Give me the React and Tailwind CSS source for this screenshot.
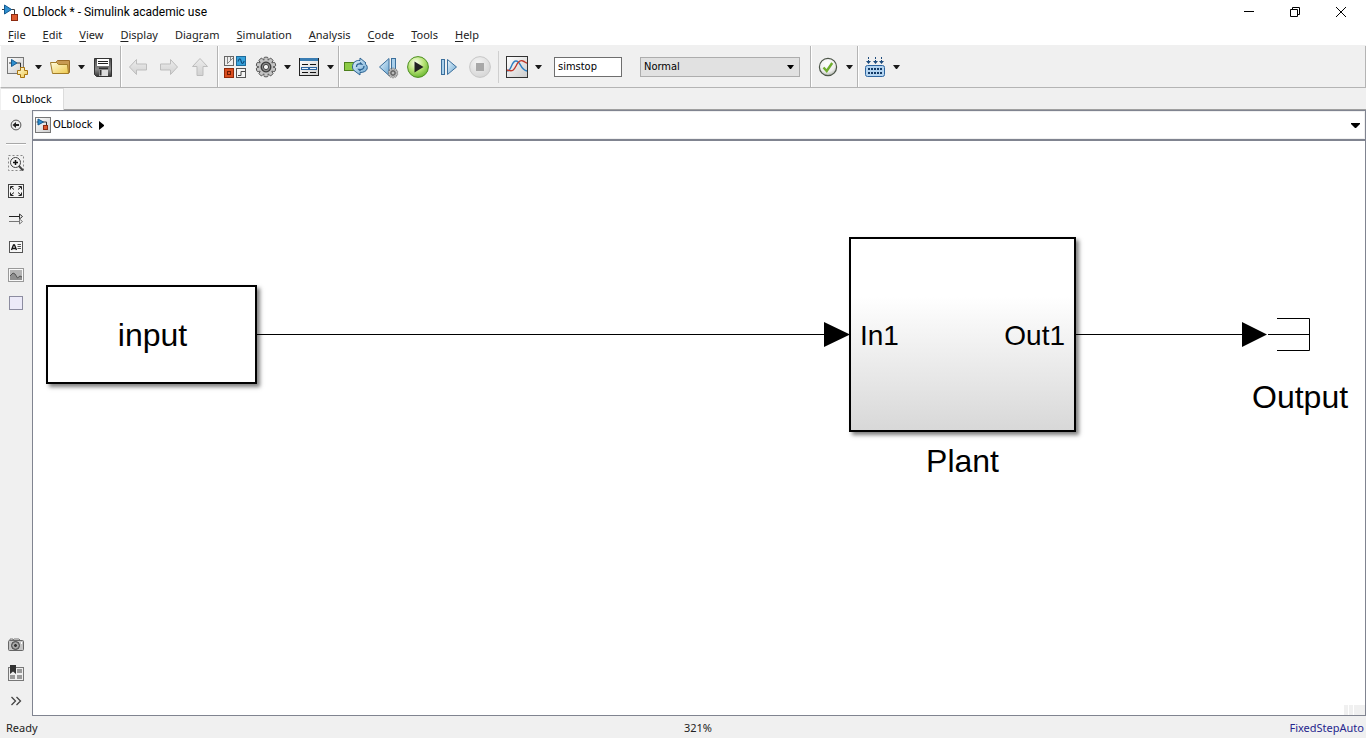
import React from "react";

const UI = "font-['Noto_Sans',sans-serif]";
const SMALL = "font-['DejaVu_Sans_Condensed','DejaVu_Sans',sans-serif]";

function Icon({ w = 24, h = 24, children }) {
  return (
    <svg width={w} height={h} viewBox={`0 0 ${w} ${h}`} fill="none" aria-hidden="true" className="block shrink-0">
      {children}
    </svg>
  );
}

function ToolButton({ label, children }) {
  return (
    <button type="button" aria-label={label} className="h-6 w-6 shrink-0">
      <Icon>{children}</Icon>
    </button>
  );
}

function Caret({ label }) {
  return (
    <button type="button" aria-label={label} className="flex h-6 w-[17px] shrink-0 items-center pl-[6px]">
      <Icon w={7} h={4}>
        <path d="M0 0h7L4 4H3z" fill="#1a1a1a" />
      </Icon>
    </button>
  );
}

function DropTool({ label, children }) {
  return (
    <div className="flex items-center">
      <ToolButton label={label}>{children}</ToolButton>
      <Caret label={`${label} options`} />
    </div>
  );
}

function Separator() {
  return <div className="w-[2px] shrink-0 self-stretch border-l border-r border-l-[#b4b4b4] border-r-white" />;
}

function ModelGlyph() {
  return (
    <>
      <path d="M0 5.500h3M9 5.500h3.500v5" stroke="#3a3a3a" />
      <path d="M2.500 1v9L9.500 5.500z" fill="#2d8fd0" stroke="#14598f" />
      <rect x="9.500" y="10.500" width="6" height="6" fill="#dd5a2e" stroke="#8c2a10" />
    </>
  );
}

function SmallModelIcon() {
  return (
    <Icon w={16} h={16}>
      <rect x=".5" y=".5" width="15" height="15" fill="url(#paper)" stroke="#777" />
      <path d="M1.500 5H4M8 5h3.500v4" stroke="#333" />
      <path d="M3 2v6l5.500-3z" fill="#2d8fd0" stroke="#14598f" />
      <rect x="8.500" y="8.500" width="4" height="4" fill="#dd5a2e" stroke="#8c2a10" />
    </Icon>
  );
}

function Gear({ cx, cy, s }) {
  const teeth = [0, 36, 72, 108, 144, 180, 216, 252, 288, 324];
  return (
    <g transform={`translate(${cx} ${cy}) scale(${s})`}>
      {teeth.map((a) => (
        <rect key={a} x="-2" y="-9.800" width="4" height="5" rx="1" transform={`rotate(${a})`} fill="#c4c4c4" stroke="#4a4a4a" strokeWidth=".9" />
      ))}
      <circle r="7.600" fill="#bcbcbc" stroke="#555" strokeWidth=".8" />
      {teeth.map((a) => (
        <rect key={a} x="-1.500" y="-9" width="3" height="3" transform={`rotate(${a})`} fill="#c4c4c4" />
      ))}
      <circle r="4.800" fill="#8a8a8a" stroke="#3c3c3c" strokeWidth="1.300" />
      <circle r="2.600" fill="#f6f6f6" stroke="#444" />
    </g>
  );
}

function Defs() {
  return (
    <svg width="0" height="0" className="absolute" aria-hidden="true">
      <defs>
        <linearGradient id="paper" x1="0" y1="0" x2="1" y2="1">
          <stop offset="0" stopColor="#fff" /><stop offset="1" stopColor="#ccc" />
        </linearGradient>
        <linearGradient id="gold" x1="0" y1="0" x2="1" y2="1">
          <stop offset="0" stopColor="#fffce0" /><stop offset="1" stopColor="#eec84a" />
        </linearGradient>
        <linearGradient id="steel" x1="0" y1="0" x2="0" y2="1">
          <stop offset="0" stopColor="#4c4c4c" /><stop offset=".6" stopColor="#8a8a8a" /><stop offset="1" stopColor="#333" />
        </linearGradient>
        <linearGradient id="sky" x1="0" y1="0" x2="1" y2="1">
          <stop offset="0" stopColor="#e6f3fb" /><stop offset="1" stopColor="#6da9d4" />
        </linearGradient>
        <linearGradient id="mist" x1="0" y1="0" x2="0" y2="1">
          <stop offset="0" stopColor="#ececec" /><stop offset="1" stopColor="#d2d2d2" />
        </linearGradient>
        <radialGradient id="lime" cx=".4" cy=".3" r=".75">
          <stop offset="0" stopColor="#fbfff0" /><stop offset=".5" stopColor="#b9e478" /><stop offset="1" stopColor="#64b32a" />
        </radialGradient>
        <radialGradient id="pearl" cx=".45" cy=".3" r=".8">
          <stop offset="0" stopColor="#fff" /><stop offset=".6" stopColor="#eee" /><stop offset="1" stopColor="#9aa093" />
        </radialGradient>
        <radialGradient id="ash" cx=".4" cy=".3" r=".8">
          <stop offset="0" stopColor="#f4f4f4" /><stop offset="1" stopColor="#d2d2d2" />
        </radialGradient>
      </defs>
    </svg>
  );
}

function TitleBar() {
  return (
    <header className="flex h-6 items-center bg-white pl-[2px]">
      <Icon w={17} h={17}><ModelGlyph /></Icon>
      <h1 className="ml-[4px] flex-1 font-['Roboto',sans-serif] text-[12px] leading-4 text-black">
        OLblock * - Simulink academic use
      </h1>
      <button type="button" aria-label="Minimize" className="flex h-5 w-[46px] items-center justify-center">
        <Icon w={10} h={10}><path d="M0 4.500h10" stroke="#000" /></Icon>
      </button>
      <button type="button" aria-label="Restore" className="flex h-5 w-[46px] items-center justify-center">
        <Icon w={10} h={10}><path d="M.5 2.500h7v7h-7zM2.500 2V.5h7v7H8" stroke="#000" /></Icon>
      </button>
      <button type="button" aria-label="Close" className="mr-[2px] flex h-5 w-[46px] items-center justify-center">
        <Icon w={10} h={10}><path d="M0 0l10 10M10 0L0 10" stroke="#000" /></Icon>
      </button>
    </header>
  );
}

const menus = [
  ["", "F", "ile"], ["", "E", "dit"], ["", "V", "iew"], ["", "D", "isplay"], ["Diag", "r", "am"],
  ["", "S", "imulation"], ["", "A", "nalysis"], ["", "C", "ode"], ["", "T", "ools"], ["", "H", "elp"],
];

function MenuBar() {
  return (
    <nav className={`${UI} flex h-[22px] items-center gap-px border-b border-[#f0f0f0] bg-white text-[11px] leading-4 text-[#222]`}>
      {menus.map(([before, key, after]) => (
        <button type="button" key={before + key + after} className="px-2">
          {before}<span className="underline underline-offset-2">{key}</span>{after}
        </button>
      ))}
    </nav>
  );
}

function Toolbar() {
  return (
    <div className="flex h-[42px] items-center border-r border-b border-l border-[#b4b4b4] border-l-white bg-[#f0f0f0]">
      <div className="flex gap-[2px] pr-[5px] pl-[4px]">
        <DropTool label="New model">
          <rect x="2.500" y="2.500" width="16" height="16" fill="url(#paper)" stroke="#777" />
          <path d="M4 8h3M12 8h3.500v6" stroke="#333" />
          <path d="M6.500 4.500v7L12 8z" fill="#2d8fd0" stroke="#14598f" />
          <path d="M15.500 12.500h4v3h3v4h-3v3h-4v-3h-3v-4h3z" fill="url(#gold)" stroke="#a87410" />
        </DropTool>
        <DropTool label="Open">
          <path d="M8.500 6.500l1-1h12v12l-2 1H8z" fill="#c89a52" stroke="#9a6b28" />
          <path d="M2.500 7.500h6l2 2h9l1 9H4.500z" fill="url(#gold)" stroke="#a27c28" />
        </DropTool>
        <ToolButton label="Save">
          <path d="M3.500 3.500h17v18h-15l-2-2z" fill="url(#steel)" stroke="#333" />
          <rect x="6" y="4" width="12" height="7" fill="#fff" />
          <path d="M7 6.500h10M7 8.500h10" stroke="#222" />
          <path d="M8 14h9v7H8z" fill="#ddd" />
          <path d="M8 13.500h9M9.500 15v5.500" stroke="#333" strokeWidth="2" />
        </ToolButton>
      </div>
      <Separator />
      <div className="flex gap-[7px] pr-[5px] pl-[4px]">
        <ToolButton label="Back"><path d="M3.500 12l7-7.500v4.500h10v6h-10v4.500z" fill="url(#mist)" stroke="#bdbdbd" /></ToolButton>
        <ToolButton label="Forward"><path d="M20.500 12l-7-7.500v4.500h-10v6h10v4.500z" fill="url(#mist)" stroke="#bdbdbd" /></ToolButton>
        <ToolButton label="Up to parent"><path d="M12 3.500l7.500 8h-4.500v9H9v-9H4.500z" fill="url(#mist)" stroke="#bdbdbd" /></ToolButton>
      </div>
      <Separator />
      <div className="flex pl-[4px]">
        <ToolButton label="Library browser">
          <rect x="1.500" y="1.500" width="9" height="9" fill="#eee" stroke="#666" />
          <path d="M4.500 2v7M4.500 8.500L10 3M7.500 2v4" stroke="#888" />
          <rect x="13.500" y="1.500" width="9" height="9" fill="#38a3dc" stroke="#1d6a9a" />
          <path d="M15 6.500c1.500-4 2.500-3 3.200 0s2 2.500 3-.5" stroke="#0f4f80" strokeWidth="1.200" />
          <rect x="1.500" y="13.500" width="9" height="9" fill="#d94d1f" stroke="#8f2808" />
          <rect x="4.500" y="16.500" width="3" height="3" stroke="#6e1a00" />
          <rect x="13.500" y="13.500" width="9" height="9" fill="#f4f4f4" stroke="#555" />
          <path d="M15 20.500h3v-4h4" stroke="#444" />
        </ToolButton>
        <div className="ml-[7px] flex gap-[2px]">
          <DropTool label="Model configuration"><Gear cx={12} cy={12} s={1} /></DropTool>
          <DropTool label="Model explorer">
            <rect x="2.500" y="3.500" width="19" height="17" fill="url(#paper)" stroke="#222" />
            <rect x="3" y="3" width="18" height="3" fill="#3a7db3" />
            <path d="M5 9.500h6M13 9.500h6M5 17.500h6M13 17.500h6" stroke="#111" />
            <rect x="4.500" y="12.500" width="15" height="2" fill="#e8f2fb" stroke="#2b64a0" />
            <path d="M11 13.500h2" stroke="#2b64a0" />
          </DropTool>
        </div>
      </div>
      <Separator />
      <div className="flex items-center pr-[10px] pl-[4px]">
        <div className="flex gap-[7px]">
          <ToolButton label="Fast restart">
            <rect x=".5" y="7.500" width="12" height="8" fill="#8dcb45" stroke="#4c7f1c" />
            <path d="M8.500 12c0-5 4-7 7.500-6.500V3l6 5-1 .5c4 3 3 9-5 9V20l-6-4.500c-1-1-1.500-2-1.500-3.500z" fill="url(#sky)" stroke="#2d6392" />
            <path d="M12.500 12c0-3 2-3.500 5-3l-1.500-1.500M20 11c0 3-2 3.800-5 3.500l1.500 1.500" stroke="#2d6392" strokeWidth="1.300" />
          </ToolButton>
          <ToolButton label="Step back">
            <path d="M4.500 12l9.500-8.500v17z" fill="url(#sky)" stroke="#3b6f9c" />
            <rect x="16.500" y="3.500" width="4" height="14" fill="#a9cfea" stroke="#3b6f9c" />
            <Gear cx={18} cy={18} s={0.5} />
          </ToolButton>
          <ToolButton label="Run">
            <circle cx="12" cy="12" r="10.400" fill="url(#lime)" stroke="#4d8f20" />
            <path d="M8.500 6.500v11l9-5.500z" fill="#222" />
          </ToolButton>
          <ToolButton label="Step forward">
            <rect x="4.500" y="4.500" width="3" height="15" fill="#a9cfea" stroke="#3b6f9c" />
            <path d="M10.500 4.500v15l9-7.500z" fill="url(#sky)" stroke="#3b6f9c" />
          </ToolButton>
          <ToolButton label="Stop">
            <circle cx="12" cy="12" r="10.400" fill="url(#ash)" stroke="#c8c8c8" />
            <rect x="8" y="8" width="8" height="8" fill="#a8a8a8" />
          </ToolButton>
        </div>
        <div className="mx-[6px] h-8 w-px bg-[#cfcfcf]" />
        <DropTool label="Data inspector">
          <rect x="1.500" y="1.500" width="21" height="21" fill="url(#paper)" stroke="#333" />
          <path d="M2 16c5 0 4-10 9-10 5 0 4 9 11 10" stroke="#2e7fc2" strokeWidth="1.400" />
          <path d="M2 15c6 2 7 0 9-4 2-5 5-6 7-5 2 .8 3 2 4 2" stroke="#c0392b" strokeWidth="1.400" />
        </DropTool>
        <input
          aria-label="Simulation stop time"
          defaultValue="simstop"
          className={`${SMALL} ml-2 h-5 w-[68px] border border-[#6e6e6e] bg-white px-[3px] text-[11px] leading-4 text-black`}
        />
        <div className="relative ml-[18px]">
          <select
            aria-label="Simulation mode"
            className={`${SMALL} block h-5 w-40 appearance-none border border-[#adadad] bg-[#e1e1e1] px-[3px] text-[11px] leading-4 text-black`}
          >
            <option>Normal</option>
          </select>
          <div className="pointer-events-none absolute top-2 right-[6px]">
            <Icon w={7} h={4}><path d="M0 0h7L4 4H3z" fill="#000" /></Icon>
          </div>
        </div>
      </div>
      <Separator />
      <div className="flex pl-[4px]">
        <DropTool label="Model advisor">
          <circle cx="12" cy="12" r="8.600" fill="url(#pearl)" stroke="#4c5548" strokeWidth="1.200" />
          <path d="M7.500 12.500l3.200 3.500 5.500-8" stroke="#6fae2e" strokeWidth="2.400" />
        </DropTool>
      </div>
      <Separator />
      <div className="flex pl-[4px]">
        <DropTool label="Build model">
          <path d="M5.500 2v6M12.500 2v6M18.500 2v6" stroke="#1d4b7c" strokeDasharray="2 1" />
          <path d="M3 6h5l-2.500 3zM10 6h5l-2.500 3zM16 6h5l-2.500 3z" fill="#1d4b7c" />
          <rect x="2.500" y="10.500" width="19" height="11" rx="2" fill="#b4d4f0" stroke="#2c65a0" />
          <path d="M5 14h15M5 18h15" stroke="#123a66" strokeWidth="2" strokeDasharray="2 1" />
        </DropTool>
      </div>
    </div>
  );
}

function TabStrip() {
  return (
    <div className="flex h-[22px] bg-[#f0f0f0]">
      <div className="w-px border-b border-[#f0f0f0]" />
      <button type="button" className={`${SMALL} w-[63px] border-t border-r border-[#dcdcdc] bg-white text-[11px] leading-4 text-black`}>
        OLblock
      </button>
      <div className="flex-1 border-b border-[#a0a0a0]" />
    </div>
  );
}

function SideButton({ label, children }) {
  return (
    <button type="button" aria-label={label} className="flex h-7 w-8 items-center justify-center">
      <Icon w={16} h={16}>{children}</Icon>
    </button>
  );
}

function SideBar() {
  return (
    <aside className="flex w-8 shrink-0 flex-col bg-[#f0f0f0] py-px">
      <SideButton label="Hide browser">
        <circle cx="8" cy="8" r="4.900" fill="#eee" stroke="#555" />
        <path d="M4.500 8l3.500-3v2h3v2H8v2z" fill="#222" />
      </SideButton>
      <div className="mx-auto mt-1 mb-[4px] h-[2px] w-5 border-t border-b border-t-[#a8a8a8] border-b-white" />
      <SideButton label="Zoom">
        <rect x=".5" y=".5" width="15" height="15" stroke="#888" strokeDasharray="2 2" />
        <path d="M10.500 10.500l4.500 5" stroke="#444" strokeWidth="2" />
        <circle cx="7.500" cy="7.500" r="5" fill="#f4f4f4" stroke="#444" />
        <path d="M5 7.500h5M7.500 5v5" stroke="#111" strokeWidth="1.500" />
      </SideButton>
      <SideButton label="Fit to view">
        <rect x=".5" y="1.500" width="15" height="13" fill="#f4f4f4" stroke="#444" />
        <path d="M2.500 6.500V3.500h3M10.500 3.500h3v3M13.500 9.500v3h-3M5.500 12.500h-3v-3M3 4l3 2.500M13 4l-3 2.500M3 12l3-2.500M13 12l-3-2.500" stroke="#222" />
      </SideButton>
      <SideButton label="Sample time display">
        <path d="M1 5.500h12" stroke="#222" />
        <path d="M11.500 3l3 2.500-3 2.500z" fill="#f0f0f0" stroke="#333" />
        <path d="M1 10.500h12" stroke="#777" />
        <path d="M11.500 8l3 2.500-3 2.500z" fill="#f0f0f0" stroke="#777" />
      </SideButton>
      <SideButton label="Annotation">
        <rect x="1.500" y="2.500" width="13" height="11" fill="#f8f8f8" stroke="#555" />
        <path d="M3.500 11l2-5h1l2 5M4.500 9.500h3" stroke="#111" strokeWidth="1.300" />
        <path d="M9.500 5.500H13M9.500 7.500H13M9.500 9.500H13" stroke="#555" />
      </SideButton>
      <SideButton label="Image">
        <rect x=".5" y="1.500" width="15" height="13" fill="#f8f8f8" stroke="#999" />
        <rect x="2" y="3" width="12" height="10" fill="#b4b4b4" />
        <path d="M2 9l3-3 2 1 2.500 4L12 9l2 1v3H2z" fill="#8f8f8f" />
        <path d="M2 9l3-3 2 1 2.500 4L12 9l2 1" stroke="#555" />
      </SideButton>
      <SideButton label="Area">
        <rect x="1.500" y="1.500" width="13" height="13" fill="#eceaf8" stroke="#8c8ca0" />
      </SideButton>
      <div className="flex-1" />
      <SideButton label="Screenshot">
        <rect x=".5" y="3.500" width="15" height="10" rx="1" fill="#c4c4c4" stroke="#666" />
        <path d="M2 3.500V2h3v1.500M5 3l1-1h5l1 1" stroke="#777" />
        <circle cx="7.500" cy="8.500" r="4" fill="#999" stroke="#444" />
        <circle cx="7.500" cy="8.500" r="2" fill="#333" stroke="#ddd" strokeWidth=".6" />
        <rect x="13" y="5" width="1" height="2" fill="#fff" />
      </SideButton>
      <SideButton label="Viewmarks">
        <rect x=".5" y="2.500" width="15" height="13" fill="#eee" stroke="#777" />
        <path d="M9 4h5v4H9zM9 10h5v4H9zM2 10h5v4H2z" fill="#999" />
        <path d="M2 0h6v9L5 6.500 2 9z" fill="#333" />
      </SideButton>
      <SideButton label="Show more">
        <path d="M3.500 4l4 4-4 4M8.500 4l4 4-4 4" stroke="#444" strokeWidth="1.300" />
      </SideButton>
    </aside>
  );
}

function Breadcrumb() {
  return (
    <div className={`${SMALL} flex h-7 shrink-0 items-center border border-[#f0f0f0] bg-white pr-[4px] pl-px text-[11px] leading-4 text-black`}>
      <SmallModelIcon />
      <a href="#OLblock" className="ml-[2px]">OLblock</a>
      <div className="ml-[6px] flex-1">
        <Icon w={6} h={9}><path d="M0 0l5 4v1l-5 4z" fill="#000" /></Icon>
      </div>
      <button type="button" aria-label="Path history">
        <Icon w={9} h={5}><path d="M0 0h9v1L5 5H4L0 1z" fill="#000" /></Icon>
      </button>
    </div>
  );
}

function Canvas() {
  return (
    <main className="relative min-h-0 flex-1 overflow-hidden border-t-2 border-[#808490] bg-white font-['Liberation_Sans',sans-serif] text-[32px] leading-9 text-black">
      <svg className="absolute top-0 left-0 h-full w-full" aria-hidden="true">
        <path d="M224 193.500h568M1043 193.500h167M1235 193.500h42M1244 177.500h32.500v32H1244" fill="none" stroke="#000" />
        <path d="M791 181v25l26-12.500zM1209 181v25l25-12.500z" fill="#000" />
      </svg>
      <div className="absolute top-[144px] left-[13px] flex h-[99px] w-[211px] items-center justify-center border-2 border-black bg-white pl-[2px] shadow-[3px_3px_4px_rgba(0,0,0,0.5)]">
        input
      </div>
      <div className="absolute top-[96px] left-[816px] flex h-[195px] w-[227px] items-center justify-between border-2 border-black bg-linear-to-b from-white from-30% to-[#d8d8d8] px-[9px] pt-[3px] text-[28px] shadow-[3px_3px_4px_rgba(0,0,0,0.5)]">
        <span>In1</span>
        <span>Out1</span>
      </div>
      <div className="absolute top-[302px] left-[816px] w-[227px] text-center">Plant</div>
      <div className="absolute top-[238px] left-[1219px]">Output</div>
      <div className="absolute right-0 bottom-0 flex gap-px">
        <div className="h-[10px] w-1 bg-[#f0f0f0]" />
        <div className="h-[10px] w-1 bg-[#f0f0f0]" />
        <div className="h-[10px] w-[11px] bg-[#f0f0f0]" />
      </div>
    </main>
  );
}

function StatusBar() {
  return (
    <footer className={`${UI} flex h-[22px] items-center bg-[#f0f0f0] pt-[2px] pr-[2px] text-[11px] leading-4 text-[#222]`}>
      <span className="w-8 shrink-0 pl-[6px]">Ready</span>
      <span className="flex-1" />
      <span>321%</span>
      <span className="flex flex-1 justify-end">
        <a href="#solver" className="text-[#26268e]">FixedStepAuto</a>
      </span>
    </footer>
  );
}

export default function App() {
  return (
    <div className="flex h-screen flex-col overflow-hidden bg-[#f0f0f0]">
      <Defs />
      <TitleBar />
      <MenuBar />
      <Toolbar />
      <TabStrip />
      <div className="flex min-h-0 flex-1">
        <SideBar />
        <div className="flex min-w-0 flex-1 flex-col border border-[#808490]">
          <Breadcrumb />
          <Canvas />
        </div>
      </div>
      <StatusBar />
    </div>
  );
}
